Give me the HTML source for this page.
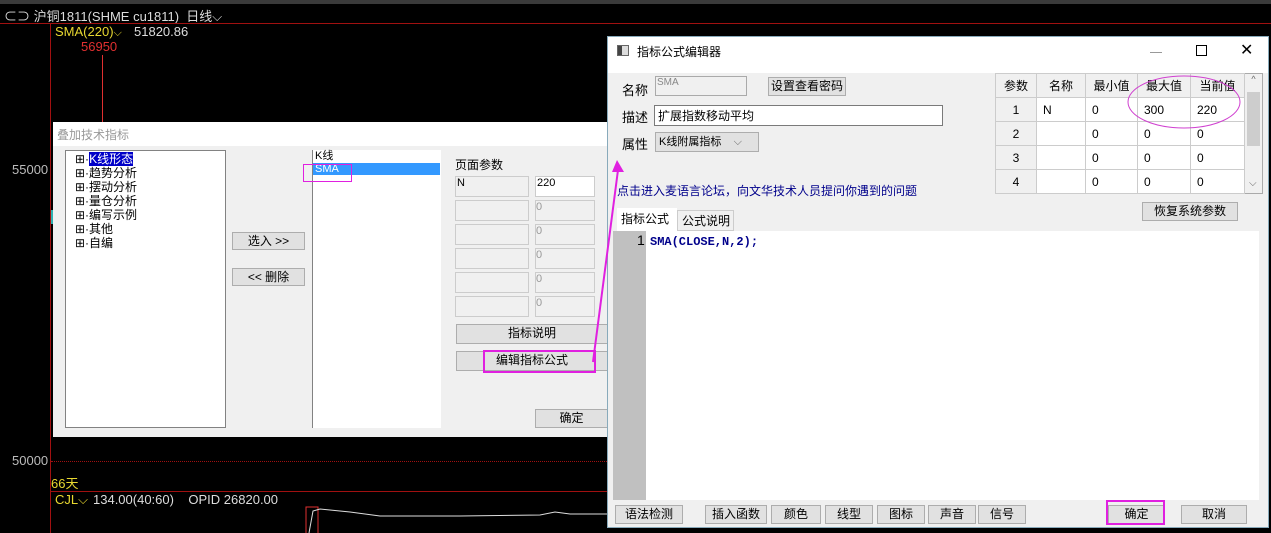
<!DOCTYPE html>
<html><head><meta charset="utf-8"><style>
*{margin:0;padding:0;box-sizing:border-box}
body{width:1271px;height:533px;background:#000;position:relative;overflow:hidden;font-family:"Liberation Sans","Noto Sans CJK SC",sans-serif;font-size:12px;color:#000}
.a{position:absolute}
.btn{position:absolute;background:#e1e1e1;border:1px solid #adadad;text-align:center;font-size:12px;line-height:17px}
.inp{position:absolute;background:#fff;border:1px solid #7a7a7a}
.gb{position:absolute;background:#f0f0f0;border:1px solid #ccc}
table{border-collapse:collapse}
td{border:1px solid #ccc;height:24px;font-size:12px;padding-left:6px}
</style></head><body>
<div class="a" style="left:0;top:0;width:1271px;height:4px;background:#3a3a3a"></div>
<div class="a" style="left:4px;top:6px;color:#ddd;font-size:13px;white-space:nowrap">⊂⊃ 沪铜1811(SHME cu1811) &nbsp;日线⌵</div>
<div class="a" style="left:0;top:23px;width:1271px;height:1px;background:#a01010"></div>
<div class="a" style="left:50px;top:24px;width:1px;height:509px;background:#a01010"></div>
<div class="a" style="left:55px;top:24px;color:#e8d830;font-size:13px">SMA(220)<span style="font-size:11px">⌵</span></div>
<div class="a" style="left:134px;top:24px;color:#ddd;font-size:13px">51820.86</div>
<div class="a" style="left:81px;top:39px;color:#e03030;font-size:13px">56950</div>
<div class="a" style="left:102px;top:55px;width:1px;height:67px;background:#e03030"></div>
<div class="a" style="left:12px;top:162px;color:#bbb;font-size:13px">55000</div>
<div class="a" style="left:12px;top:453px;color:#bbb;font-size:13px">50000</div>
<div class="a" style="left:51px;top:461px;width:560px;border-top:1px dotted #a01010"></div>
<div class="a" style="left:51px;top:473px;color:#e8d830;font-size:13px">66天</div>
<div class="a" style="left:51px;top:491px;width:560px;height:1px;background:#a01010"></div>
<div class="a" style="left:55px;top:492px;color:#e8d830;font-size:13px">CJL⌵</div>
<div class="a" style="left:93px;top:492px;color:#ddd;font-size:13px;white-space:nowrap">134.00(40:60) &nbsp;&nbsp; OPID 26820.00</div>
<div class="a" style="left:51px;top:210px;width:3px;height:14px;background:#30b0b0"></div>
<svg class="a" style="left:300px;top:505px" width="310" height="28"><rect x="6" y="2" width="12" height="28" fill="none" stroke="#e03030"/><polyline points="9,28 13,6 20,4 50,7 80,11 160,11 240,10 255,7 270,9 310,9" fill="none" stroke="#ddd"/></svg>

<!-- left dialog -->
<div class="a" style="left:53px;top:122px;width:560px;height:315px;background:#f0f0f0"></div>
<div class="a" style="left:53px;top:122px;width:560px;height:24px;background:#fff"></div>
<div class="a" style="left:57px;top:126px;color:#999;font-size:12px">叠加技术指标</div>
<div class="a" style="left:65px;top:150px;width:161px;height:278px;background:#fff;border:1px solid #828282"></div>
<div class="a" style="left:75px;top:152px;font-size:12px;line-height:14px">
<div>⊞·<span style="background:#0000c8;color:#fff">K线形态</span></div><div>⊞·趋势分析</div><div>⊞·摆动分析</div><div>⊞·量仓分析</div><div>⊞·编写示例</div><div>⊞·其他</div><div>⊞·自编</div></div>
<div class="btn" style="left:232px;top:232px;width:73px;height:18px">选入 &gt;&gt;</div>
<div class="btn" style="left:232px;top:268px;width:73px;height:18px">&lt;&lt; 删除</div>
<div class="a" style="left:312px;top:150px;width:129px;height:278px;background:#fff;border-left:1px solid #828282"></div>
<div class="a" style="left:315px;top:150px;font-size:11px;line-height:13px">K线</div>
<div class="a" style="left:313px;top:163px;width:127px;height:12px;background:#3399ff;color:#fff;font-size:11px;line-height:12px;padding-left:2px">SMA</div>
<div class="a" style="left:303px;top:164px;width:49px;height:18px;border:1px solid #e020e0"></div>
<div class="a" style="left:455px;top:156px;font-size:12px">页面参数</div>
<div class="gb" style="left:455px;top:176px;width:74px;height:21px;font-size:11px;padding-left:1px">N</div>
<div class="inp" style="left:535px;top:176px;width:60px;height:21px;border-color:#ccc;font-size:11px;padding-left:1px">220</div>
<div class="gb" style="left:455px;top:200px;width:74px;height:21px"></div><div class="gb" style="left:535px;top:200px;width:60px;height:21px;color:#999;font-size:11px">0</div>
<div class="gb" style="left:455px;top:224px;width:74px;height:21px"></div><div class="gb" style="left:535px;top:224px;width:60px;height:21px;color:#999;font-size:11px">0</div>
<div class="gb" style="left:455px;top:248px;width:74px;height:21px"></div><div class="gb" style="left:535px;top:248px;width:60px;height:21px;color:#999;font-size:11px">0</div>
<div class="gb" style="left:455px;top:272px;width:74px;height:21px"></div><div class="gb" style="left:535px;top:272px;width:60px;height:21px;color:#999;font-size:11px">0</div>
<div class="gb" style="left:455px;top:296px;width:74px;height:21px"></div><div class="gb" style="left:535px;top:296px;width:60px;height:21px;color:#999;font-size:11px">0</div>
<div class="btn" style="left:456px;top:324px;width:152px;height:20px">指标说明</div>
<div class="btn" style="left:456px;top:351px;width:152px;height:20px">编辑指标公式</div>
<div class="a" style="left:483px;top:350px;width:113px;height:23px;border:2px solid #e020e0"></div>
<div class="btn" style="left:535px;top:409px;width:73px;height:19px">确定</div>

<!-- right dialog -->
<div class="a" style="left:607px;top:36px;width:662px;height:492px;background:#f0f0f0;border:1px solid #8ab"></div>
<div class="a" style="left:608px;top:37px;width:660px;height:36px;background:#fff"></div>
<div class="a" style="left:617px;top:45px;width:12px;height:11px;border:1px solid #666;background:linear-gradient(90deg,#444 40%,#ddd 40%)"></div>
<div class="a" style="left:637px;top:43px;font-size:12px">指标公式编辑器</div>
<div class="a" style="left:1150px;top:52px;width:12px;height:1px;background:#999"></div>
<div class="a" style="left:1196px;top:45px;width:11px;height:11px;border:1px solid #000"></div>
<div class="a" style="left:1240px;top:40px;font-size:16px">✕</div>
<div class="a" style="left:622px;top:80px;font-size:13px">名称</div>
<div class="a" style="left:655px;top:76px;width:92px;height:20px;background:#f0f0f0;border:1px solid #aaa;color:#888;font-size:10px;padding-left:1px">SMA</div>
<div class="btn" style="left:768px;top:77px;width:78px;height:19px">设置查看密码</div>
<div class="a" style="left:622px;top:107px;font-size:13px">描述</div>
<div class="inp" style="left:654px;top:105px;width:289px;height:21px;font-size:12px;padding:1px 3px">扩展指数移动平均</div>
<div class="a" style="left:622px;top:134px;font-size:13px">属性</div>
<div class="a" style="left:655px;top:132px;width:104px;height:20px;background:#e1e1e1;border:1px solid #adadad;font-size:11px;line-height:18px;padding-left:3px">K线附属指标 &nbsp;&nbsp;&nbsp;<span style="color:#666">⌵</span></div>
<div class="a" style="left:617px;top:182px;color:#00008b;font-size:12px">点击进入麦语言论坛，向文华技术人员提问你遇到的问题</div>
<div class="a" style="left:995px;top:73px;width:268px;height:121px;background:#fff;border:1px solid #aaa"></div>
<table class="a" style="left:995px;top:73px;width:250px">
<tr style="background:#f0f0f0"><td style="width:41px;text-align:center;padding:0">参数</td><td style="width:49px;text-align:center;padding:0">名称</td><td style="width:52px;text-align:center;padding:0">最小值</td><td style="width:53px;text-align:center;padding:0">最大值</td><td style="text-align:center;padding:0">当前值</td></tr>
<tr><td style="background:#f0f0f0;text-align:center;padding:0">1</td><td>N</td><td>0</td><td>300</td><td>220</td></tr>
<tr><td style="background:#f0f0f0;text-align:center;padding:0">2</td><td></td><td>0</td><td>0</td><td>0</td></tr>
<tr><td style="background:#f0f0f0;text-align:center;padding:0">3</td><td></td><td>0</td><td>0</td><td>0</td></tr>
<tr><td style="background:#f0f0f0;text-align:center;padding:0">4</td><td></td><td>0</td><td>0</td><td>0</td></tr>
</table>
<div class="a" style="left:1245px;top:74px;width:17px;height:119px;background:#f0f0f0;color:#666;font-size:9px;text-align:center">^</div>
<div class="a" style="left:1247px;top:92px;width:13px;height:54px;background:#cdcdcd"></div>
<div class="a" style="left:1249px;top:178px;color:#666;font-size:10px">⌵</div>
<div class="btn" style="left:1142px;top:202px;width:96px;height:19px">恢复系统参数</div>
<div class="a" style="left:617px;top:208px;width:60px;height:23px;background:#fff;font-size:12px;padding:2px 4px">指标公式</div>
<div class="a" style="left:677px;top:210px;width:57px;height:21px;border:1px solid #ccc;font-size:12px;padding:1px 4px;white-space:nowrap">公式说明</div>
<div class="a" style="left:613px;top:231px;width:646px;height:269px;background:#fff"></div>
<div class="a" style="left:613px;top:231px;width:33px;height:269px;background:#c0c0c0"></div>
<div class="a" style="left:637px;top:232px;font-size:14px">1</div>
<div class="a" style="left:650px;top:235px;font-family:'Liberation Mono',monospace;font-size:12px;font-weight:bold;color:#00008b">SMA(CLOSE,N,2);</div>
<div class="btn" style="left:615px;top:505px;width:68px;height:19px">语法检测</div>
<div class="btn" style="left:705px;top:505px;width:62px;height:19px">插入函数</div>
<div class="btn" style="left:771px;top:505px;width:50px;height:19px">颜色</div>
<div class="btn" style="left:825px;top:505px;width:48px;height:19px">线型</div>
<div class="btn" style="left:877px;top:505px;width:48px;height:19px">图标</div>
<div class="btn" style="left:928px;top:505px;width:48px;height:19px">声音</div>
<div class="btn" style="left:978px;top:505px;width:48px;height:19px">信号</div>
<div class="btn" style="left:1108px;top:505px;width:57px;height:19px">确定</div>
<div class="a" style="left:1106px;top:500px;width:59px;height:25px;border:2px solid #e020e0"></div>
<div class="btn" style="left:1181px;top:505px;width:66px;height:19px">取消</div>
<svg class="a" style="left:0;top:0" width="1271" height="533">
<ellipse cx="1184" cy="102" rx="56" ry="26" fill="none" stroke="#d040d0" stroke-width="1"/>
<line x1="593" y1="362" x2="618" y2="170" stroke="#e020e0" stroke-width="2"/>
<polygon points="612,172 624,172 617,160" fill="#e020e0"/>
</svg>
</body></html>
